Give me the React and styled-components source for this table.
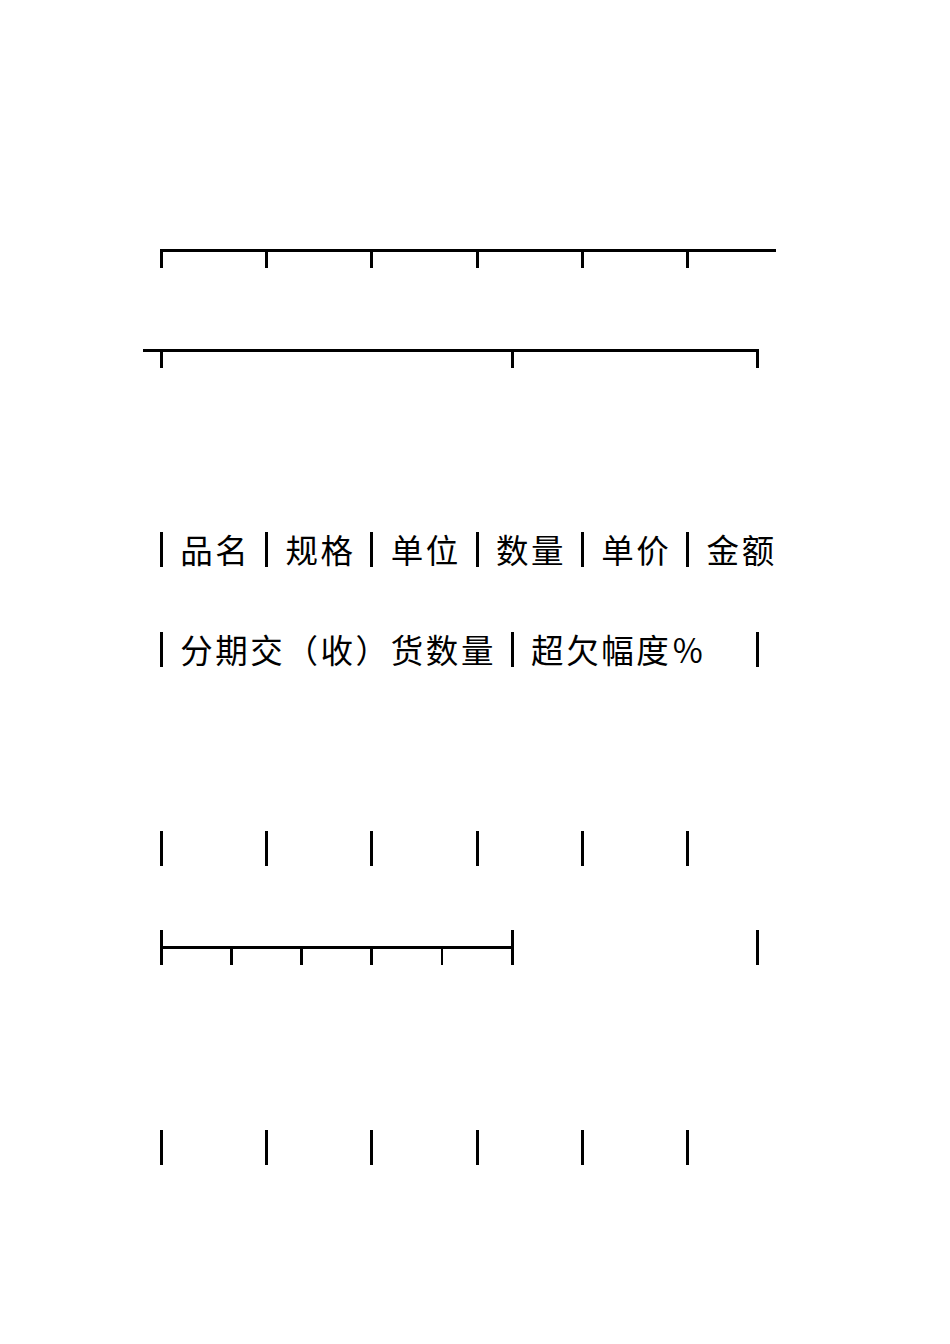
import React from "react";
import styled, { createGlobalStyle } from "styled-components";

const CELL_W = 35.1;
const CELL_H = 35;
const V_W = 2.8; // vertical stroke width
const H_W = 3; // horizontal stroke thickness
const PITCH = 99.6;
const CX = CELL_W / 2;
const CY = CELL_H / 2;

const GlobalStyle = createGlobalStyle`
  html, body {
    margin: 0;
    padding: 0;
    background: #ffffff;
  }
  body {
    font-family: "Noto Sans CJK SC", "Noto Sans", sans-serif;
    color: #000;
  }
`;

const Page = styled.div`
  width: 950px;
  min-height: 1344px;
  box-sizing: border-box;
  padding: 233.3px 0 0 143.75px;
  display: flex;
  flex-direction: column;
  gap: ${PITCH - CELL_H}px;
`;

const Line = styled.div`
  display: grid;
  grid-template-columns: repeat(18, ${CELL_W}px);
  grid-auto-rows: ${CELL_H}px;
  height: ${CELL_H}px;
`;

const FrameCell = styled.div`
  display: grid;
  grid-template: 100% / 100%;
  width: ${CELL_W}px;
  height: ${CELL_H}px;
`;

const HStroke = styled.span`
  grid-area: 1 / 1;
  align-self: center;
  height: ${H_W}px;
  background: #000;
  margin-left: ${(p) => (p.$l ? "-0.5px" : `${CX - V_W / 2}px`)};
  margin-right: ${(p) => (p.$r ? "-0.5px" : `${CX - V_W / 2}px`)};
`;

const VStroke = styled.span`
  grid-area: 1 / 1;
  justify-self: center;
  width: ${V_W}px;
  background: #000;
  margin-top: ${(p) => (p.$u ? "0px" : `${CY - H_W / 2}px`)};
  margin-bottom: ${(p) => (p.$d ? "0px" : `${CY - H_W / 2}px`)};
`;

const TextCell = styled.div`
  width: ${CELL_W}px;
  height: ${CELL_H}px;
  display: flex;
  align-items: center;
  justify-content: center;
  font-family: "Noto Sans CJK SC", "Noto Sans", sans-serif;
  font-size: 32.5px;
  font-weight: 400;
  line-height: 1;
  white-space: nowrap;
`;

const FRAME = {
  "┏": { r: 1, d: 1 },
  "┓": { l: 1, d: 1 },
  "━": { l: 1, r: 1 },
  "┳": { l: 1, r: 1, d: 1 },
  "┃": { u: 1, d: 1 },
  "┣": { u: 1, d: 1, r: 1 },
  "┫": { u: 1, d: 1, l: 1 },
};

const rows = [
  "┏━━┳━━┳━━┳━━┳━━┳━━",
  "┳━━━━━━━━━┳━━━━━━┓",
  "",
  "┃品名┃规格┃单位┃数量┃单价┃金额",
  "┃分期交（收）货数量┃超欠幅度％　┃",
  "",
  "┃　　┃　　┃　　┃　　┃　　┃　　",
  "┣━┳━┳━┳━┳━┫　　　　　　┃",
  "",
  "┃　　┃　　┃　　┃　　┃　　┃　　",
];

function Frame({ s }) {
  return (
    <FrameCell>
      {(s.l || s.r) && <HStroke $l={s.l} $r={s.r} />}
      {(s.u || s.d) && <VStroke $u={s.u} $d={s.d} />}
    </FrameCell>
  );
}

function Row({ text }) {
  const chars = Array.from(text);
  return (
    <Line>
      {chars.map((c, i) =>
        FRAME[c] ? (
          <Frame key={i} s={FRAME[c]} />
        ) : (
          <TextCell key={i}>{c === "　" ? "" : c}</TextCell>
        )
      )}
    </Line>
  );
}

export default function App() {
  return (
    <>
      <GlobalStyle />
      <Page>
        {rows.map((r, i) => (
          <Row key={i} text={r} />
        ))}
      </Page>
    </>
  );
}
